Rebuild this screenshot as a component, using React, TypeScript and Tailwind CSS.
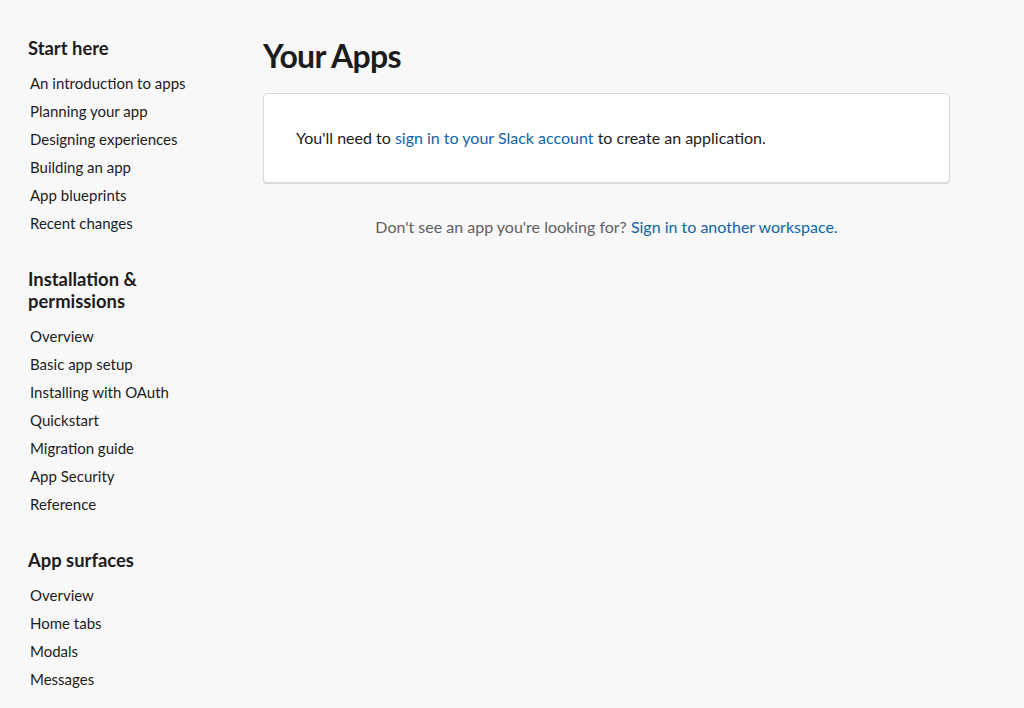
const sections = [
  {
    title: ['Start here'],
    items: ['An introduction to apps', 'Planning your app', 'Designing experiences', 'Building an app', 'App blueprints', 'Recent changes'],
  },
  {
    title: ['Installation &', 'permissions'],
    items: ['Overview', 'Basic app setup', 'Installing with OAuth', 'Quickstart', 'Migration guide', 'App Security', 'Reference'],
  },
  {
    title: ['App surfaces'],
    items: ['Overview', 'Home tabs', 'Modals', 'Messages'],
  },
];

export default function App() {
  return (
    <div className="min-h-[708px] bg-[#f8f8f8] text-[#1d1c1d]" style={{ fontFamily: 'Lato, "Open Sans", sans-serif' }}>
      <div className="flex pl-[28px] pt-[37px]">
        <nav className="w-[235px] shrink-0 flex flex-col gap-[31px]">
          {sections.map((s, i) => (
            <div key={i}>
              <h3 className="text-[18.4px] leading-[22px] font-bold mb-[10px]">
                {s.title.map((t, j) => (
                  <div key={j}>{t}</div>
                ))}
              </h3>
              <ul className="pl-[2px]">
                {s.items.map((item, j) => (
                  <li key={j} className="text-[15px] leading-[28px]">
                    <a href="#">{item}</a>
                  </li>
                ))}
              </ul>
            </div>
          ))}
        </nav>

        <main className="w-[687px] shrink-0">
          <h1 className="text-[32px] leading-[40px] font-bold -mt-[1px] tracking-[-0.7px]">Your Apps</h1>
          <div className="mt-[17px] h-[90px] bg-white border border-[#dddddd] rounded-[4px] shadow-[0_1px_1px_rgba(0,0,0,0.15)] flex items-center px-[32px]">
            <p className="text-[16px] leading-[22px]">
              You'll need to <a href="#" className="text-[#1264a3]">sign in to your Slack account</a> to create an application.
            </p>
          </div>
          <p className="mt-[33px] text-center text-[16px] leading-[22px] text-[#616061]">
            Don't see an app you're looking for? <a href="#" className="text-[#1264a3]">Sign in to another workspace.</a>
          </p>
        </main>
      </div>
    </div>
  );
}
